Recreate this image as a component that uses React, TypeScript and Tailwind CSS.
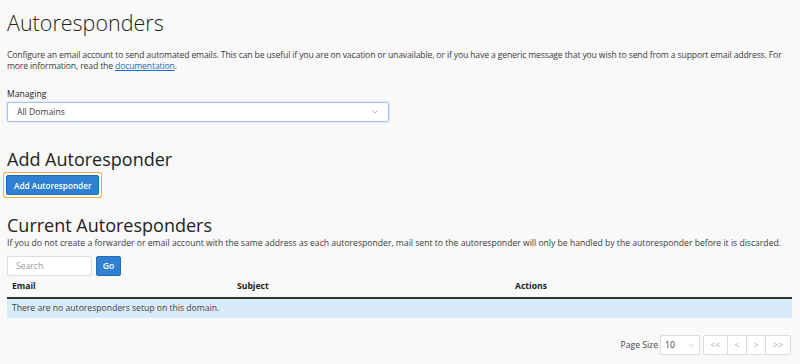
import { ChevronDown } from "lucide-react";

const App = () => {
  return (
    <div className="min-h-[364px] w-[800px] bg-[#f9f9f9] px-[7px] pr-[8px] text-[8.62px] leading-[11px] text-[#3a3a3a] font-['Open_Sans',sans-serif]">
      <h1 className="pt-[11px] text-[21.5px] font-light leading-[24px] text-[#222]">Autoresponders</h1>

      <p className="mt-[15px] tracking-[-0.14px]">
        <span className="whitespace-nowrap">
          Configure an email account to send automated emails. This can be useful if you are on vacation or unavailable, or if you have a generic message that you wish to send from a support email address. For
        </span>
        <br />
        more information, read the{" "}
        <a href="#" className="text-[#1a6ec4] underline">documentation</a>.
      </p>

      <div className="mt-[17px]">
        <label className="block font-medium text-[#222]">Managing</label>
        <div className="mt-[2px] flex h-[20px] w-[382px] items-center justify-between rounded-[2px] border border-[#9fc6ee] bg-white px-[9px] shadow-[0_0_2px_rgba(102,175,233,0.5)]">
          <span>All Domains</span>
          <ChevronDown className="h-[8px] w-[8px] text-[#888]" strokeWidth={2} />
        </div>
      </div>

      <h2 className="mt-[26px] text-[18px] leading-[22px] text-[#222]">Add Autoresponder</h2>
      <div className="-ml-[4px] mt-[2px] inline-block rounded-[2px] border border-[#f3b03d] p-[2px]">
        <button className="h-[20px] rounded-[2px] border border-[#1f6bb5] bg-[#2f7fd2] px-[7px] text-[8.2px] font-semibold text-white">
          Add Autoresponder
        </button>
      </div>

      <h2 className="mt-[16px] text-[18px] leading-[22px] text-[#222]">Current Autoresponders</h2>
      <p className="mt-[2px]">
        If you do not create a forwarder or email account with the same address as each autoresponder, mail sent to the autoresponder will only be handled by the autoresponder before it is discarded.
      </p>

      <div className="mt-[7px] flex items-center gap-[4px]">
        <div className="flex h-[20px] w-[85px] items-center rounded-[2px] border border-[#ddd] bg-white px-[8px] text-[#999]">Search</div>
        <button className="h-[20px] w-[25px] rounded-[2px] border border-[#1f6bb5] bg-[#2f7fd2] font-semibold text-white">Go</button>
      </div>

      <table className="mt-0 w-full border-collapse">
        <thead>
          <tr className="border-b-2 border-[#333]">
            <th className="w-[225px] px-[5px] py-[5px] text-left font-bold text-[#222]">Email</th>
            <th className="w-[278px] px-[5px] py-[5px] text-left font-bold text-[#222]">Subject</th>
            <th className="px-[5px] py-[5px] text-left font-bold text-[#222]">Actions</th>
          </tr>
        </thead>
        <tbody>
          <tr className="bg-[#d8ebf8]">
            <td colSpan={3} className="h-[20px] px-[5px] text-[#444]">There are no autoresponders setup on this domain.</td>
          </tr>
        </tbody>
      </table>

      <div className="mt-[17px] flex items-center justify-end gap-[2px] pr-[1px]">
        <span className="text-[#444]">Page Size</span>
        <div className="flex h-[20px] w-[40px] items-center justify-between rounded-[2px] border border-[#ddd] bg-white px-[4px]">
          <span>10</span>
          <ChevronDown className="h-[7px] w-[7px] text-[#999]" strokeWidth={2} />
        </div>
        <div className="ml-[1px] flex h-[20px] overflow-hidden rounded-[2px] border border-[#ddd] bg-white text-[#aaa]">
          <span className="flex w-[24px] items-center justify-center border-r border-[#ddd]">&lt;&lt;</span>
          <span className="flex w-[19px] items-center justify-center border-r border-[#ddd]">&lt;</span>
          <span className="flex w-[19px] items-center justify-center border-r border-[#ddd]">&gt;</span>
          <span className="flex w-[24px] items-center justify-center">&gt;&gt;</span>
        </div>
      </div>
    </div>
  );
};

export default App;
